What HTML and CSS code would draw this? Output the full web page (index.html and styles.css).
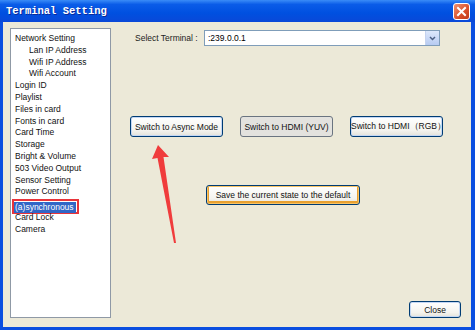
FILE: index.html
```html
<!DOCTYPE html>
<html lang="en">
<head>
  <meta charset="UTF-8"/>
  <title>Terminal Setting</title>
  <link rel="stylesheet" href="styles.css">
</head>
<body>
  <div class="window">
    <div class="titlebar">
      <span class="title">Terminal Setting</span>
      <span class="close-x">
        <svg width="13" height="13" viewBox="0 0 13 13"><path d="M3 3 L10 10 M10 3 L3 10" stroke="#fff" stroke-width="2" stroke-linecap="square"/></svg>
      </span>
    </div>
    <div class="client">
      <ul class="menu">
        <li>Network Setting</li>
        <li class="sub">Lan IP Address</li>
        <li class="sub">Wifi IP Address</li>
        <li class="sub">Wifi Account</li>
        <li>Login ID</li>
        <li>Playlist</li>
        <li>Files in card</li>
        <li>Fonts in card</li>
        <li>Card Time</li>
        <li>Storage</li>
        <li>Bright &amp; Volume</li>
        <li>503 Video Output</li>
        <li>Sensor Setting</li>
        <li>Power Control</li>
        <li class="selected"><span>(a)synchronous</span></li>
        <li>Card Lock</li>
        <li>Camera</li>
      </ul>
      <div class="panel">
        <div class="terminal-row">
          <span class="label">Select Terminal :</span>
          <div class="combo">
            <span>:239.0.0.1</span>
            <span class="combo-btn">
              <svg width="7" height="5" viewBox="0 0 7 5"><path d="M1 1 L3.5 3.5 L6 1" fill="none" stroke="#4d6185" stroke-width="1.5"/></svg>
            </span>
          </div>
        </div>
        <div class="btn-row">
          <button class="btn">Switch to Async Mode</button>
          <button class="btn gray">Switch to HDMI (YUV)</button>
          <button class="btn">Switch to HDMI（RGB）</button>
        </div>
        <div class="save-row">
          <button class="btn save">Save the current state to the default</button>
        </div>
        <div class="bottom-row">
          <button class="btn close">Close</button>
        </div>
      </div>
    </div>
    <svg class="arrow" width="36" height="110" viewBox="0 0 36 110">
      <polygon points="13,10 7,24 12.5,23 29,108 31,108 18.5,22 24,22" fill="#f03c3c"/>
    </svg>
  </div>
</body>
</html>
```

FILE: styles.css
```css
body {
  margin: 0;
  font-family: "Liberation Sans", Arial, sans-serif;
}

.window {
  position: relative;
  width: 475px;
  height: 330px;
  box-sizing: border-box;
  background: #0a4ee0;
  padding: 0 4px 3px 3px;
  display: flex;
  flex-direction: column;
}

.titlebar {
  height: 22px;
  margin: 0 -4px 0 -3px;
  padding: 0 5px 0 6px;
  display: flex;
  align-items: center;
  justify-content: space-between;
  background: linear-gradient(#3a8cf7 0%, #0a5ce8 20%, #0050e0 60%, #0a48d8 100%);
}

.title {
  font-family: "Liberation Mono", "Courier New", monospace;
  font-weight: bold;
  font-size: 10.5px;
  color: #fff;
  text-shadow: 1px 1px 0 #0a2a9a;
}

.close-x {
  width: 15px;
  height: 15px;
  margin-top: 1px;
  border: 1px solid #fff;
  border-radius: 3px;
  background: linear-gradient(135deg, #f09070, #d8502a 60%, #c03a1a);
  display: flex;
  align-items: center;
  justify-content: center;
}

.client {
  flex: 1;
  background: #ece9d8;
  display: flex;
  padding: 6px 7px 9px 7px;
}

.menu {
  list-style: none;
  margin: 0;
  padding: 4px 0 0 4px;
  width: 95px;
  background: #fff;
  border: 1px solid #8f99a6;
  font-size: 8.5px;
  color: #111;
}

.menu li {
  height: 11.8px;
  line-height: 11.8px;
  white-space: nowrap;
}

.menu li.sub {
  padding-left: 14px;
}

.menu li.selected {
  margin-left: -3px;
  width: 67px;
  height: 15px;
  line-height: 13px;
  border: 2px solid #e8343a;
  box-sizing: border-box;
  margin-top: 1px;
  margin-bottom: -2px;
}

.menu li.selected span {
  display: inline-block;
  background: #3166c6;
  color: #fff;
  padding: 0 2px 0 1px;
  line-height: 11px;
}

.panel {
  flex: 1;
  display: flex;
  flex-direction: column;
  padding-left: 19px;
}

.terminal-row {
  display: flex;
  align-items: center;
  margin-top: 2px;
  height: 16px;
}

.label {
  font-size: 8.5px;
  color: #222;
  margin-left: 5px;
  width: 69px;
}

.combo {
  width: 236px;
  height: 16px;
  box-sizing: border-box;
  border: 1px solid #7f9db9;
  background: #fff;
  display: flex;
  align-items: center;
  justify-content: space-between;
  font-size: 8.5px;
  padding-left: 3px;
}

.combo-btn {
  width: 13px;
  height: 14px;
  background: linear-gradient(#dde8fb, #b7cbf2);
  border-left: 1px solid #c5d3ef;
  display: flex;
  align-items: center;
  justify-content: center;
}

.btn {
  font-family: "Liberation Sans", Arial, sans-serif;
  font-size: 8.5px;
  color: #111;
  background: linear-gradient(#fff, #f4f3ee 70%, #e3e2da);
  border: 1px solid #003c74;
  border-radius: 3px;
  box-shadow: inset 0 0 0 1px #c4d7f4;
  padding: 0;
  white-space: nowrap;
}

.btn-row {
  display: flex;
  gap: 17px;
  margin-top: 70px;
}

.btn-row .btn {
  width: 93px;
  height: 21px;
}

.btn.gray {
  background: #e3e2de;
  border-color: #6a7480;
  box-shadow: none;
}

.save-row {
  margin-top: 47px;
  padding-left: 76px;
}

.btn.save {
  width: 154px;
  height: 20px;
  box-shadow: inset 0 0 0 1px #f8c466, inset 0 -1px 0 2px #e8a030;
}

.bottom-row {
  margin-top: auto;
  display: flex;
  justify-content: flex-end;
  padding-right: 3px;
}

.btn.close {
  width: 52px;
  height: 17px;
}

.arrow {
  position: absolute;
  left: 145px;
  top: 135px;
}
```
